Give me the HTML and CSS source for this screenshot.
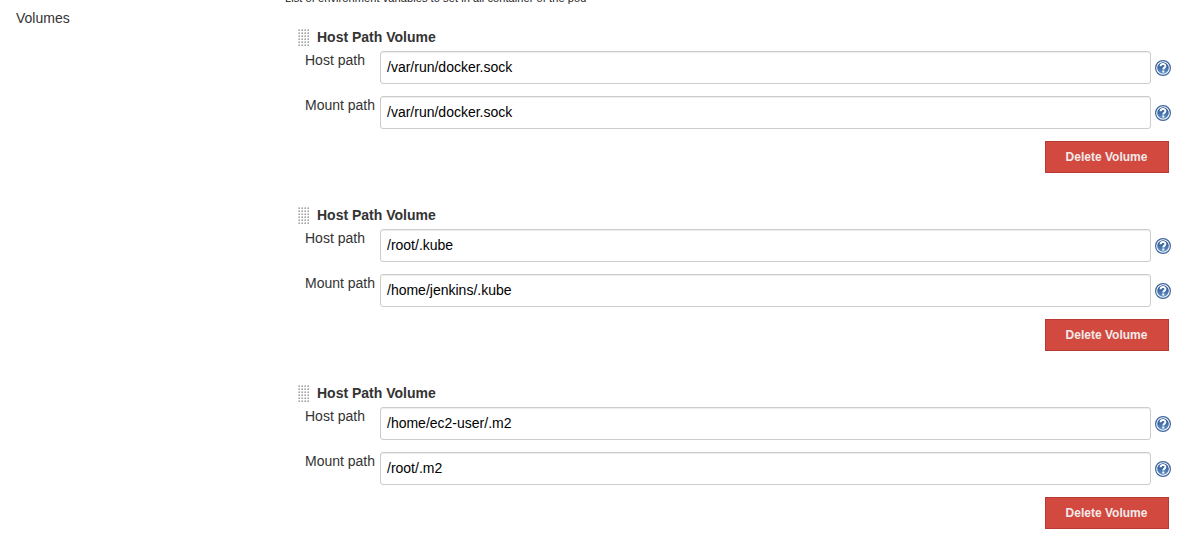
FILE: index.html
```html
<!DOCTYPE html>
<html lang="en">
<head>
<meta charset="utf-8">
<title>Volumes</title>
<link rel="stylesheet" href="styles.css">
</head>
<body>
<svg class="defs" width="0" height="0" aria-hidden="true">
  <defs>
    <linearGradient id="blue" x1="0" y1="0" x2="0" y2="1">
      <stop offset="0" stop-color="#1f4a8a"/><stop offset="1" stop-color="#6594c8"/>
    </linearGradient>
    <symbol id="help" viewBox="0 0 16 16">
      <circle cx="8" cy="8" r="7.4" fill="#fff" stroke="#3f669e" stroke-width="1.2"/>
      <circle cx="8" cy="8" r="5.8" fill="url(#blue)"/>
      <path d="M5.6 6.2C5.6 3.2 10.4 3.2 10.4 6C10.4 7.7 8.3 7.6 8.3 9.6M8.3 10.6V12.5" fill="none" stroke="#fff" stroke-width="2"/>
    </symbol>
    <pattern id="dots" width="3" height="3" patternUnits="userSpaceOnUse">
      <rect width="1" height="1" fill="#e2e2e2"/><rect x="1" width="1" height="1" fill="#c4c4c4"/><rect y="1" width="1" height="1" fill="#c4c4c4"/><rect x="1" y="1" width="1" height="1" fill="#a8a8a8"/>
    </pattern>
    <symbol id="grip" viewBox="0 0 11 17"><rect width="11" height="17" fill="url(#dots)"/></symbol>
  </defs>
</svg>
<main class="config">
  <div class="label">Volumes</div>
  <div class="content">
    <div class="description">List of environment variables to set in all container of the pod</div>
    <section class="volume">
      <h2 class="title"><svg class="grip"><use href="#grip"/></svg>Host Path Volume</h2>
      <div class="field"><label>Host path</label><input type="text" value="/var/run/docker.sock"><svg class="help"><use href="#help"/></svg></div>
      <div class="field"><label>Mount path</label><input type="text" value="/var/run/docker.sock"><svg class="help"><use href="#help"/></svg></div>
      <button class="delete">Delete Volume</button>
    </section>
    <section class="volume">
      <h2 class="title"><svg class="grip"><use href="#grip"/></svg>Host Path Volume</h2>
      <div class="field"><label>Host path</label><input type="text" value="/root/.kube"><svg class="help"><use href="#help"/></svg></div>
      <div class="field"><label>Mount path</label><input type="text" value="/home/jenkins/.kube"><svg class="help"><use href="#help"/></svg></div>
      <button class="delete">Delete Volume</button>
    </section>
    <section class="volume">
      <h2 class="title"><svg class="grip"><use href="#grip"/></svg>Host Path Volume</h2>
      <div class="field"><label>Host path</label><input type="text" value="/home/ec2-user/.m2"><svg class="help"><use href="#help"/></svg></div>
      <div class="field"><label>Mount path</label><input type="text" value="/root/.m2"><svg class="help"><use href="#help"/></svg></div>
      <button class="delete">Delete Volume</button>
    </section>
  </div>
</main>
</body>
</html>
```
FILE: styles.css
```css
* { box-sizing: border-box; }
body {
  margin: 0;
  height: 544px;
  overflow: hidden;
  background: #fff;
  color: #333;
  font: 14px/20px "Liberation Sans", Arial, sans-serif;
}
.defs { display: block; }
.config { display: grid; grid-template-columns: 285px 886px; }
.label { padding: 8px 0 0 16px; }
.description {
  height: 28px;
  margin-top: -9px;
  margin-bottom: 9px;
  color: #222;
  font-size: 11px;
  line-height: 14px;
  letter-spacing: .085px;
  white-space: nowrap;
}
.volume {
  display: flex;
  flex-direction: column;
  height: 178px;
  padding-left: 13px;
}
.title {
  display: flex;
  align-items: flex-start;
  gap: 8px;
  height: 23px;
  margin: 0;
  font-size: 14px;
  line-height: 18px;
}
.grip { width: 11px; height: 17px; margin-top: 1px; }
.field {
  display: grid;
  grid-template-columns: 75px 771px 16px;
  height: 33px;
  margin: 0 0 12px 7px;
}
.field label { margin-top: -1px; white-space: nowrap; }
.field input {
  height: 33px;
  padding: 0 6px 1px;
  border: 1px solid #ccc;
  border-radius: 3px;
  box-shadow: inset 0 1px 1px rgba(0, 0, 0, .075);
  color: #000;
  font: inherit;
}
.help { width: 16px; height: 16px; margin: 9px 0 0 4px; }
.delete {
  align-self: flex-end;
  width: 124px;
  height: 32px;
  margin-right: 2px;
  padding: 0 1px 0 0;
  border: 1px solid #b93a32;
  background: #d1493f;
  color: #f3e9e9;
  font: bold 12px/16px "Liberation Sans", Arial, sans-serif;
}
```
